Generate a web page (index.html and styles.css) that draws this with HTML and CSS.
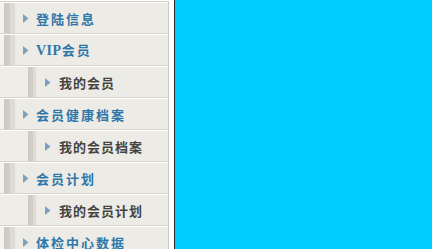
FILE: index.html
```html
<!DOCTYPE html>
<html lang="zh-CN">
<head>
<meta charset="utf-8">
<title>会员菜单</title>
<link rel="stylesheet" href="styles.css">
</head>
<body>
<div class="page">
  <nav class="sidebar">
    <div class="row main"><svg class="arrow" viewBox="0 0 6 9" width="6" height="9"><polygon points="0,0 5.5,4.5 0,9"/></svg><span>登陆信息</span></div>
    <div class="row main"><svg class="arrow" viewBox="0 0 6 9" width="6" height="9"><polygon points="0,0 5.5,4.5 0,9"/></svg><span><b class="latin">VIP</b>会员</span></div>
    <div class="row sub"><svg class="arrow" viewBox="0 0 6 9" width="6" height="9"><polygon points="0,0 5.5,4.5 0,9"/></svg><span>我的会员</span></div>
    <div class="row main"><svg class="arrow" viewBox="0 0 6 9" width="6" height="9"><polygon points="0,0 5.5,4.5 0,9"/></svg><span>会员健康档案</span></div>
    <div class="row sub"><svg class="arrow" viewBox="0 0 6 9" width="6" height="9"><polygon points="0,0 5.5,4.5 0,9"/></svg><span>我的会员档案</span></div>
    <div class="row main"><svg class="arrow" viewBox="0 0 6 9" width="6" height="9"><polygon points="0,0 5.5,4.5 0,9"/></svg><span>会员计划</span></div>
    <div class="row sub"><svg class="arrow" viewBox="0 0 6 9" width="6" height="9"><polygon points="0,0 5.5,4.5 0,9"/></svg><span>我的会员计划</span></div>
    <div class="row main"><svg class="arrow" viewBox="0 0 6 9" width="6" height="9"><polygon points="0,0 5.5,4.5 0,9"/></svg><span>体检中心数据</span></div>
  </nav>
  <div class="gap"></div>
  <main class="content"></main>
</div>
</body>
</html>
```
FILE: styles.css
```css
html, body {
  margin: 0;
  padding: 0;
  height: 100%;
  overflow: hidden;
  background: #ffffff;
}

.page {
  display: flex;
  height: 100%;
  font-family: "Liberation Serif", "Noto Sans CJK SC", serif;
  font-weight: bold;
  font-size: 13px;
}

.sidebar {
  width: 168px;
  flex: none;
  margin-top: 1px;
  border-top: 1px solid #d3d0c8;
  border-right: 1px solid #cbc8c0;
  align-self: flex-start;
}

.gap {
  width: 5px;
  flex: none;
}

.content {
  flex: 1;
  background: #00ccff;
  border-left: 1px solid #2b2b2b;
}

.row {
  display: flex;
  align-items: center;
  height: 30px;
  border-top: 1px solid #ffffff;
  border-bottom: 1px solid #d6d3cb;
  white-space: nowrap;
}

.row span {
  line-height: 1;
  padding-top: 2px;
}

.latin {
  font-size: 14px;
  letter-spacing: 0.5px;
}

.arrow {
  flex: none;
  fill: #7f9fc0;
}

.main {
  background: linear-gradient(to right, #f4f3ef 0, #f4f3ef 4px, #cdc9c1 4px, #d2cec6 10px, #dedbd4 10px, #dedbd4 15px, #ecebe5 15px);
  color: #2f77aa;
  letter-spacing: 2px;
}

.main .arrow {
  margin-left: 23px;
  margin-right: 7px;
}

.sub {
  background: linear-gradient(to right, #eeede8 0, #eeede8 28px, #cdc9c1 28px, #d2cec6 33px, #dedbd4 33px, #dedbd4 36px, #ecebe5 36px);
  color: #444444;
  letter-spacing: 1px;
}

.sub .arrow {
  margin-left: 45px;
  margin-right: 8px;
}
```
